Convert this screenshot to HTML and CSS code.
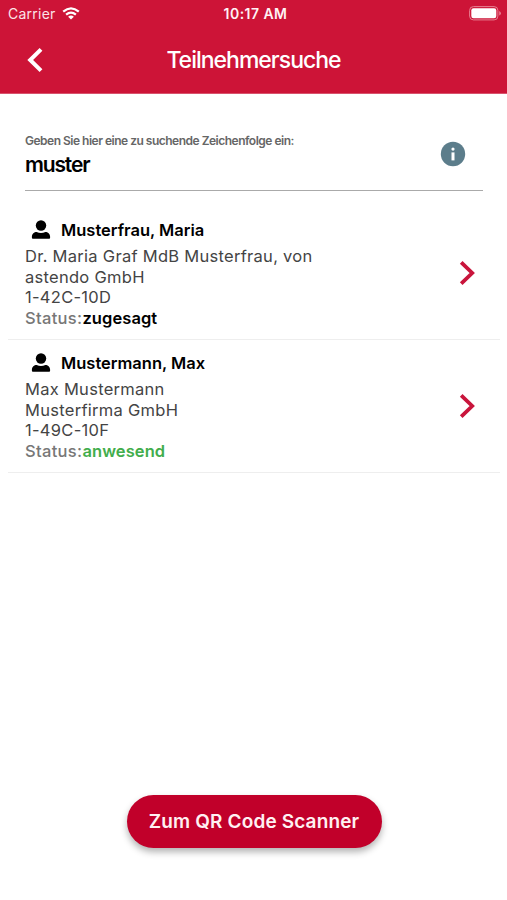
FILE: index.html
```html
<!DOCTYPE html>
<html lang="de">
<head>
<meta charset="utf-8">
<title>Teilnehmersuche</title>
<link rel="stylesheet" href="styles.css">
</head>
<body>
<header class="top">
  <div class="status-bar">
    <div class="carrier"><span>Carrier</span>
      <svg width="18" height="13" viewBox="0 0 18 13" fill="none" stroke="#fff" stroke-width="2.2"><path d="M1.2 4.7Q9-2.1 16.8 4.7M4.1 7.7Q9 3.5 13.9 7.7"/><path d="M9 12.6L6.1 9.7Q9 7.4 11.9 9.7Z" fill="#fff" stroke="none"/></svg>
    </div>
    <div class="time">10:17 AM</div>
    <svg class="battery" width="33" height="15" viewBox="0 0 33 15"><rect x=".6" y=".6" width="28.3" height="13.3" rx="3.8" fill="none" stroke="#e77f91" stroke-width="1"/><rect x="2.3" y="2.3" width="25" height="9.9" rx="2.2" fill="#fff"/><path d="M30.2 5v4.6q1.7-.7 1.7-2.3T30.2 5Z" fill="#e77f91"/></svg>
  </div>
  <div class="title-bar">
    <svg class="back" width="16" height="26" viewBox="0 0 16 26" fill="none" stroke="#fff" stroke-width="4"><path d="M14 2.4L3.2 13L14 23.6"/></svg>
    <h1>Teilnehmersuche</h1>
  </div>
</header>
<main>
  <section class="search">
    <div>
      <div class="label">Geben Sie hier eine zu suchende Zeichenfolge ein:</div>
      <div class="query">muster</div>
    </div>
    <svg class="info" width="26" height="26" viewBox="0 0 26 26"><circle cx="13" cy="13" r="12.2" fill="#5c7d8b"/><circle cx="13" cy="8.1" r="1.6" fill="#fff"/><rect x="11.5" y="11.4" width="3" height="8" fill="#fff"/></svg>
  </section>
  <article class="person">
    <div class="details">
      <h2><svg width="20" height="20" viewBox="0 0 20 20"><circle cx="10" cy="5.5" r="5.2"/><path d="M.9 17.700v-1.200C.9 13.800 3.200 11.900 5.600 11.900q4.400 2 8.800 0c2.400 0 4.700 1.900 4.700 4.600v1.200q0 1-1 1H1.900q-1 0-1-1Z"/></svg><span>Musterfrau, Maria</span></h2>
      <p>Dr. Maria Graf MdB Musterfrau, von</p>
      <p>astendo GmbH</p>
      <p>1-42C-10D</p>
      <p class="state"><span>Status:</span><strong>zugesagt</strong></p>
    </div>
    <svg class="next" width="17" height="26" viewBox="0 0 17 26" fill="none" stroke="#c9153c" stroke-width="3.8"><path d="M2.200 2.300L13.200 13L2.200 23.700"/></svg>
  </article>
  <article class="person">
    <div class="details">
      <h2><svg width="20" height="20" viewBox="0 0 20 20"><circle cx="10" cy="5.5" r="5.2"/><path d="M.9 17.700v-1.200C.9 13.800 3.200 11.900 5.600 11.900q4.400 2 8.800 0c2.400 0 4.700 1.900 4.700 4.600v1.200q0 1-1 1H1.900q-1 0-1-1Z"/></svg><span>Mustermann, Max</span></h2>
      <p>Max Mustermann</p>
      <p>Musterfirma GmbH</p>
      <p>1-49C-10F</p>
      <p class="state"><span>Status:</span><strong class="present">anwesend</strong></p>
    </div>
    <svg class="next" width="17" height="26" viewBox="0 0 17 26" fill="none" stroke="#c9153c" stroke-width="3.8"><path d="M2.200 2.300L13.200 13L2.200 23.700"/></svg>
  </article>
</main>
<footer><button class="scan">Zum QR Code Scanner</button></footer>
</body>
</html>
```
FILE: styles.css
```css
* { box-sizing: border-box; }
body {
  margin: 0;
  height: 900px;
  display: flex;
  flex-direction: column;
  background: #fff;
  color: #000;
  font-family: Inter, "Liberation Sans", sans-serif;
}
svg { display: block; flex: none; }
h1, h2, p { margin: 0; }
.top {
  height: 94px;
  background: #cd1437;
  border-bottom: 1px solid #d8536d;
  color: #fff;
}
.status-bar {
  height: 27px;
  padding: 0 5px 0 8px;
  display: grid;
  grid-template-columns: 1fr auto 1fr;
  align-items: center;
}
.carrier { display: flex; align-items: center; gap: 6px; font-size: 14px; letter-spacing: .25px; color: #fbe3e7; }
.time { margin-left: 1px; font-size: 14px; font-weight: 600; letter-spacing: .45px; color: #fff2f4; }
.battery { justify-self: end; }
.title-bar {
  height: 66px;
  display: grid;
  grid-template-columns: 80px 1fr 80px;
  align-items: center;
  padding-bottom: 1px;
}
.back { margin-left: 27px; }
h1 { font-size: 23px; font-weight: 500; letter-spacing: -1px; text-align: center; }
.search {
  height: 97px;
  margin: 0 24px 0 25px;
  padding: 38px 17px 0 0;
  border-bottom: 1px solid #aaa;
  display: flex;
  justify-content: space-between;
}
.label { font-size: 12px; line-height: 18px; font-weight: 600; letter-spacing: -.5px; color: #666; }
.query { margin-top: 1px; font-size: 21px; line-height: 27px; font-weight: 600; letter-spacing: -1.15px; }
.info { margin-top: 9px; }
.person {
  height: 133px;
  margin: 0 7px 0 8px;
  padding: 0 24px 0 17px;
  border-bottom: 1px solid #eee;
  display: flex;
  justify-content: space-between;
}
.person:nth-of-type(1) { margin-top: 16px; }
.details { padding-top: 7px; }
h2 { height: 32px; display: flex; align-items: center; gap: 10px; padding: 0 0 1px 6px; font-size: 16.5px; font-weight: 600; letter-spacing: 0; }
.details p { font-size: 16.5px; line-height: 20.7px; letter-spacing: .28px; color: #444; }
.details .state { font-weight: 500; letter-spacing: .32px; color: #777; }
.state strong { font-weight: 600; letter-spacing: .08px; color: #000; }
.state .present { color: #42ad4c; }
.next { margin-top: 53px; }
footer { margin-top: auto; height: 105px; text-align: center; }
.scan {
  width: 255px;
  height: 53px;
  margin-left: 1px;
  border: 0;
  border-radius: 27px;
  background: #c1002a;
  color: #fff0f2;
  font: 600 19px Inter, "Liberation Sans", sans-serif;
  letter-spacing: .15px;
  box-shadow: 0 4px 7px rgba(0, 0, 0, .3);
}
```
